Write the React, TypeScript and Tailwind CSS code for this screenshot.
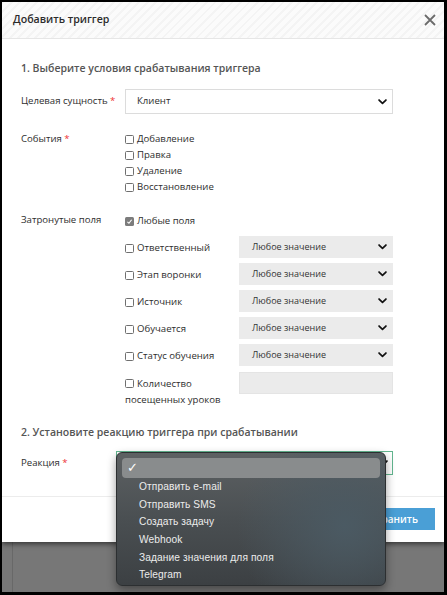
import React from 'react';

const Chevron = ({ className = '' }: { className?: string }) => (
  <svg viewBox="0 0 10 7" className={className} width="9" height="6">
    <path d="M1 1.2 L5 5 L9 1.2" fill="none" stroke="#111" strokeWidth="2" strokeLinecap="round" strokeLinejoin="round" />
  </svg>
);

const Check = ({ checked = false }: { checked?: boolean }) =>
  checked ? (
    <span className="inline-flex items-center justify-center w-[9px] h-[9px] rounded-[1.5px] bg-[#7c7c7c] shrink-0">
      <svg viewBox="0 0 10 10" width="7" height="7">
        <path d="M2 5.5 L4.2 7.5 L8 2.5" fill="none" stroke="#fff" strokeWidth="1.6" />
      </svg>
    </span>
  ) : (
    <span className="inline-block w-[9px] h-[9px] rounded-[1.5px] border border-[#6f6f6f] bg-white shrink-0" />
  );

const GraySelect = () => (
  <div className="h-[22px] bg-[#ebebeb] flex items-center justify-between pl-[13px] pr-[6px] text-[9px] text-[#333]">
    <span>Любое значение</span>
    <Chevron />
  </div>
);

const fieldRows = ['Ответственный', 'Этап воронки', 'Источник', 'Обучается', 'Статус обучения'];
const reactions = ['Отправить e-mail', 'Отправить SMS', 'Создать задачу', 'Webhook', 'Задание значения для поля', 'Telegram'];

export default function App() {
  return (
    <div className="w-[447px] h-[595px] overflow-hidden bg-black pt-[2px] pl-[2px] pr-[3px] pb-[3px] font-['Open_Sans',sans-serif]">
      <div className="relative h-full bg-[#777777] flex flex-col">
        {/* modal */}
        <div className="h-[540px] bg-white flex flex-col shadow-[0_2px_5px_rgba(0,0,0,0.55)] z-10">
          <div className="h-[37px] shrink-0 flex items-center justify-between pl-[11px] pr-[8px] border-b border-[#e6e6e6] bg-[repeating-linear-gradient(135deg,#f4f4f4_0px,#f4f4f4_2px,#fbfbfb_2px,#fbfbfb_6px)]">
            <span className="text-[10.6px] font-semibold text-[#2b2b2b]">Добавить триггер</span>
            <svg viewBox="0 0 12 12" width="12" height="12">
              <path d="M1 1 L11 11 M11 1 L1 11" stroke="#6b6b6b" strokeWidth="1.8" />
            </svg>
          </div>

          <div className="flex-1 pl-[19px] pt-[21px] text-[9.6px] text-[#2e2e2e] whitespace-nowrap">
            <div className="text-[10.5px] leading-[16px] font-semibold text-[#555]">1. Выберите условия срабатывания триггера</div>

            <div className="grid grid-cols-[104px_268px] items-center mt-[13px]">
              <span>
                Целевая сущность <span className="text-[#e33]">*</span>
              </span>
              <div className="h-[25px] border border-[#dcdcdc] flex items-center justify-between pl-[11px] pr-[5px]">
                <span>Клиент</span>
                <Chevron />
              </div>
            </div>

            <div className="grid grid-cols-[104px_268px] mt-[17px] leading-[16px]">
              <span>
                События <span className="text-[#e33]">*</span>
              </span>
              <div className="flex flex-col">
                {['Добавление', 'Правка', 'Удаление', 'Восстановление'].map((t) => (
                  <label key={t} className="flex items-center gap-[3px]">
                    <Check />
                    <span>{t}</span>
                  </label>
                ))}
              </div>
            </div>

            <div className="grid grid-cols-[104px_268px] mt-[17px] leading-[16px]">
              <span>Затронутые поля</span>
              <div className="flex flex-col">
                <label className="flex items-center gap-[3px] mt-[1px]">
                  <Check checked />
                  <span>Любые поля</span>
                </label>
                <div className="flex flex-col gap-[5px] mt-[7px]">
                  {fieldRows.map((t) => (
                    <div key={t} className="grid grid-cols-[114px_154px] items-center">
                      <label className="flex items-center gap-[3px] pt-[2px]">
                        <Check />
                        <span>{t}</span>
                      </label>
                      <GraySelect />
                    </div>
                  ))}
                  <div className="grid grid-cols-[114px_154px] items-start mt-[1px]">
                    <div className="leading-[15px] pt-[4px]">
                      <span className="inline-flex items-center gap-[3px]">
                        <Check />
                        <span>Количество</span>
                      </span>
                      <br />
                      посещенных уроков
                    </div>
                    <div className="h-[22px] bg-[#ebebeb] border border-[#e4e4e4]" />
                  </div>
                </div>
              </div>
            </div>

            <div className="text-[10.5px] leading-[16px] font-semibold text-[#555] mt-[17px]">2. Установите реакцию триггера при срабатывании</div>

            <div className="grid grid-cols-[95px_277px] items-center mt-[11px]">
              <span>
                Реакция <span className="text-[#e33]">*</span>
              </span>
              <div className="h-[24px] border border-[#62b58f] flex items-center justify-end pr-[4px]">
                <Chevron />
              </div>
            </div>
          </div>

          <div className="h-[46px] shrink-0 border-t border-[#ececec] flex justify-end items-start pt-[11px] pr-[9px]">
            <button className="h-[22px] px-[17px] bg-[#4a9fd6] text-white text-[10px] font-semibold">Сохранить</button>
          </div>
        </div>

        {/* page behind */}
        <div className="flex-1 pl-[10px]">
          <div className="h-full border-l border-[#686868]" />
        </div>

        {/* native dropdown menu */}
        <div className="absolute left-[114px] top-[450px] w-[270px] h-[134px] z-20 rounded-[6px] border border-[#2c2f31] shadow-[0_4px_10px_rgba(0,0,0,0.4)] bg-[radial-gradient(circle_at_85%_55%,#4b5a63_0%,rgba(75,90,99,0)_45%),linear-gradient(180deg,#5d6163_0%,#4a4f52_50%,#3c4043_100%)] p-[5px] font-['Liberation_Sans',sans-serif]">
          <div className="h-[20px] rounded-[4px] bg-[#898c8d] flex items-center pl-[5px] text-white text-[13px]">✓</div>
          <div className="flex flex-col">
            {reactions.map((r) => (
              <div key={r} className="h-[17.6px] flex items-center pl-[17px] text-[10.2px] tracking-[0.1px] text-[#ececec]">
                {r}
              </div>
            ))}
          </div>
        </div>
      </div>
    </div>
  );
}
